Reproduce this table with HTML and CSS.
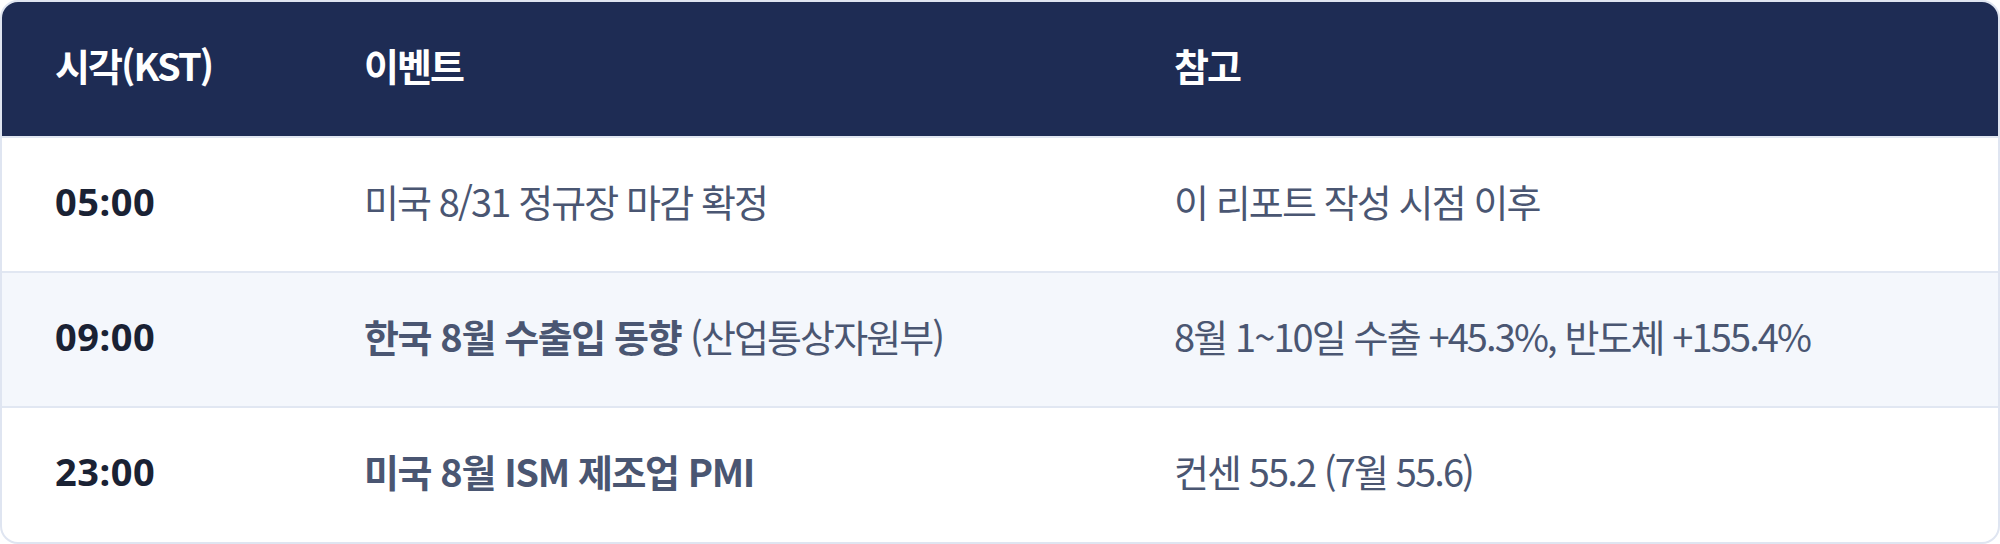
FILE: index.html
```html
<!DOCTYPE html>
<html lang="ko">
<head>
<meta charset="utf-8">
<title>일정</title>
<link rel="stylesheet" href="styles.css">
</head>
<body>
<div class="card">
  <div class="row head">
    <div class="cell">시각(KST)</div>
    <div class="cell">이벤트</div>
    <div class="cell">참고</div>
  </div>
  <div class="row">
    <div class="cell time">05:00</div>
    <div class="cell ev">미국 8/31 정규장 마감 확정</div>
    <div class="cell ev">이 리포트 작성 시점 이후</div>
  </div>
  <div class="row alt">
    <div class="cell time">09:00</div>
    <div class="cell ev"><b>한국 8월 수출입 동향</b> (산업통상자원부)</div>
    <div class="cell ev">8월 1~10일 수출 +45.3%, 반도체 +155.4%</div>
  </div>
  <div class="row last">
    <div class="cell time">23:00</div>
    <div class="cell ev"><b>미국 8월 ISM 제조업 PMI</b></div>
    <div class="cell ev">컨센 55.2 (7월 55.6)</div>
  </div>
</div>
</body>
</html>
```
FILE: styles.css
```css
html, body {
  margin: 0;
  padding: 0;
  background: #ffffff;
}
body {
  font-family: "Noto Sans CJK KR", sans-serif;
  font-size: 38px;
  line-height: 52px;
}
.card {
  width: 2000px;
  height: 544px;
  box-sizing: border-box;
  border: 2px solid #dfe5f1;
  border-radius: 18px;
  overflow: hidden;
}
.row {
  display: grid;
  grid-template-columns: 309px 810px 1fr;
  align-items: center;
  height: 135px;
  box-sizing: border-box;
  border-top: 2px solid #e1e7f2;
}
.row.head {
  height: 134px;
  border-top: 0;
  background: #1e2c54;
  color: #ffffff;
  font-weight: 700;
  letter-spacing: -1.9px;
}
.row.alt {
  background: #f4f7fc;
}
.row.last {
  height: 136px;
}
.cell {
  padding: 0 0 8px 53px;
  white-space: nowrap;
}
.time {
  font-family: "Noto Sans", "Noto Sans CJK KR", sans-serif;
  color: #1a2234;
  font-weight: 700;
  letter-spacing: 0.5px;
}
.ev {
  color: #4a5672;
  letter-spacing: -1.9px;
}
.ev b {
  font-weight: 700;
  letter-spacing: -1.4px;
}
```
